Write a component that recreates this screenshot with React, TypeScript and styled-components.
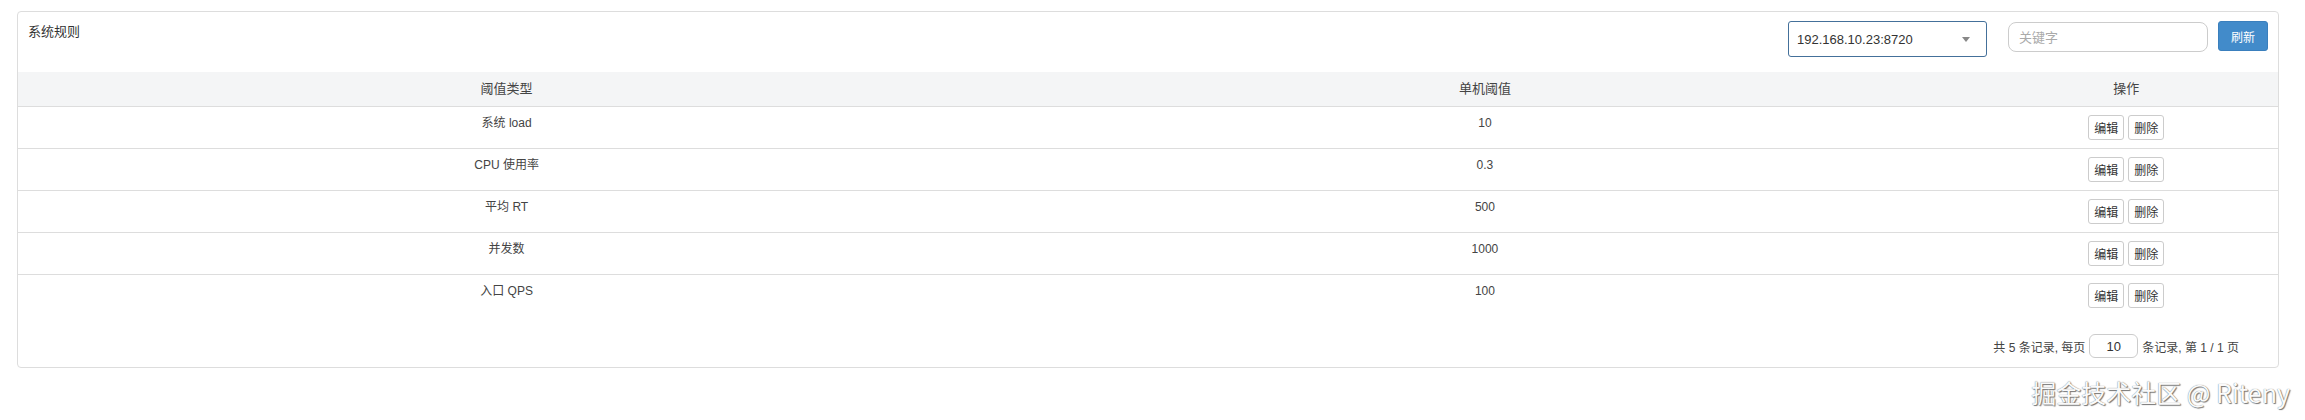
import React from "react";
import styled, { createGlobalStyle } from "styled-components";

const GlobalStyle = createGlobalStyle`
  body {
    margin: 0;
    background: #fff;
    font-family: "Liberation Sans", Arial, "Noto Sans CJK SC", sans-serif;
    color: #333;
  }
`;

const Page = styled.div`
  position: relative;
  height: 420px;
  padding: 11px 26px 0 17px;
  box-sizing: border-box;
`;

const Panel = styled.div`
  border: 1px solid #ddd;
  border-radius: 4px;
  background: #fff;
  height: 357px;
  box-sizing: border-box;
  display: flex;
  flex-direction: column;
`;

const PanelHead = styled.div`
  height: 60px;
  box-sizing: border-box;
  padding: 9px 10px 0 10px;
  display: flex;
  align-items: flex-start;
`;

const Title = styled.div`
  font-size: 13px;
  line-height: 18px;
  padding-top: 2px;
  color: #333;
  flex: 1;
`;

const Select = styled.div`
  width: 199px;
  height: 36px;
  box-sizing: border-box;
  border: 1px solid #44709a;
  border-radius: 3px;
  display: flex;
  align-items: center;
  justify-content: space-between;
  padding: 0 16px 0 8px;
  font-size: 13px;
  color: #333;
`;

const Caret = styled.span`
  width: 0;
  height: 0;
  border-top: 5px solid #888;
  border-left: 4px solid transparent;
  border-right: 4px solid transparent;
`;

const SearchInput = styled.input`
  margin-left: 21px;
  margin-top: 1px;
  width: 200px;
  height: 30px;
  box-sizing: border-box;
  border: 1px solid #ccc;
  border-radius: 8px;
  padding: 0 10px;
  font-size: 13px;
  font-family: inherit;
  outline: none;
  &::placeholder {
    color: #aaa;
  }
`;

const PrimaryButton = styled.button`
  margin-left: 10px;
  width: 50px;
  height: 30px;
  border: 1px solid #3a7fbd;
  border-radius: 3px;
  background: #428bca;
  color: #fff;
  font-size: 12px;
  font-family: inherit;
  padding: 0;
`;

const Table = styled.table`
  width: 100%;
  border-collapse: collapse;
  table-layout: fixed;
  font-size: 12px;
  color: #444;
`;

const HeadCell = styled.th<{ $w: string }>`
  width: ${(p) => p.$w};
  background: #f4f5f6;
  font-weight: normal;
  font-size: 13px;
  line-height: 18px;
  padding: 8px;
  border-bottom: 1px solid #ddd;
  text-align: center;
  color: #444;
`;

const Cell = styled.td`
  text-align: center;
  vertical-align: top;
  padding: 8px;
  line-height: 17px;
  border-top: 1px solid #ddd;
  height: 25px;
`;

const FirstRowCell = styled(Cell)`
  border-top: none;
`;

const SmallButton = styled.button`
  height: 25px;
  padding: 0 5px;
  margin: 0 2px;
  border: 1px solid #ccc;
  border-radius: 3px;
  background: #fff;
  color: #333;
  font-size: 12px;
  font-family: inherit;
`;

const Pager = styled.div`
  margin-top: auto;
  margin-bottom: 9px;
  display: flex;
  align-items: center;
  justify-content: flex-end;
  padding-right: 39px;
  font-size: 12px;
  color: #444;
`;

const PageSize = styled.input`
  width: 49px;
  height: 24px;
  box-sizing: border-box;
  margin: 0 4px;
  border: 1px solid #ccc;
  border-radius: 6px;
  text-align: center;
  font-size: 13px;
  font-family: inherit;
  color: #333;
  outline: none;
`;

const Watermark = styled.div`
  position: absolute;
  right: 15px;
  top: 374px;
  font-size: 25px;
  font-family: "Noto Sans CJK SC", "Liberation Sans", sans-serif;
  color: #fafafa;
  text-shadow: 0 0 1px #666, 1px 1px 1px #777;
  white-space: nowrap;
`;

const rules = [
  { type: "系统 load", value: "10" },
  { type: "CPU 使用率", value: "0.3" },
  { type: "平均 RT", value: "500" },
  { type: "并发数", value: "1000" },
  { type: "入口 QPS", value: "100" },
];

const App: React.FC = () => {
  return (
    <Page>
      <GlobalStyle />
      <Panel>
        <PanelHead>
          <Title>系统规则</Title>
          <Select>
            <span>192.168.10.23:8720</span>
            <Caret />
          </Select>
          <SearchInput placeholder="关键字" />
          <PrimaryButton>刷新</PrimaryButton>
        </PanelHead>
        <Table>
          <thead>
            <tr>
              <HeadCell $w="43.45%">阈值类型</HeadCell>
              <HeadCell $w="43.55%">单机阈值</HeadCell>
              <HeadCell $w="13%">操作</HeadCell>
            </tr>
          </thead>
          <tbody>
            {rules.map((r, i) => {
              const C = i === 0 ? FirstRowCell : Cell;
              return (
                <tr key={r.type}>
                  <C>{r.type}</C>
                  <C>{r.value}</C>
                  <C>
                    <SmallButton>编辑</SmallButton>
                    <SmallButton>删除</SmallButton>
                  </C>
                </tr>
              );
            })}
          </tbody>
        </Table>
        <Pager>
          共 5 条记录, 每页
          <PageSize defaultValue="10" />
          条记录, 第 1 / 1 页
        </Pager>
      </Panel>
      <Watermark>掘金技术社区 @ Riteny</Watermark>
    </Page>
  );
};

export default App;
